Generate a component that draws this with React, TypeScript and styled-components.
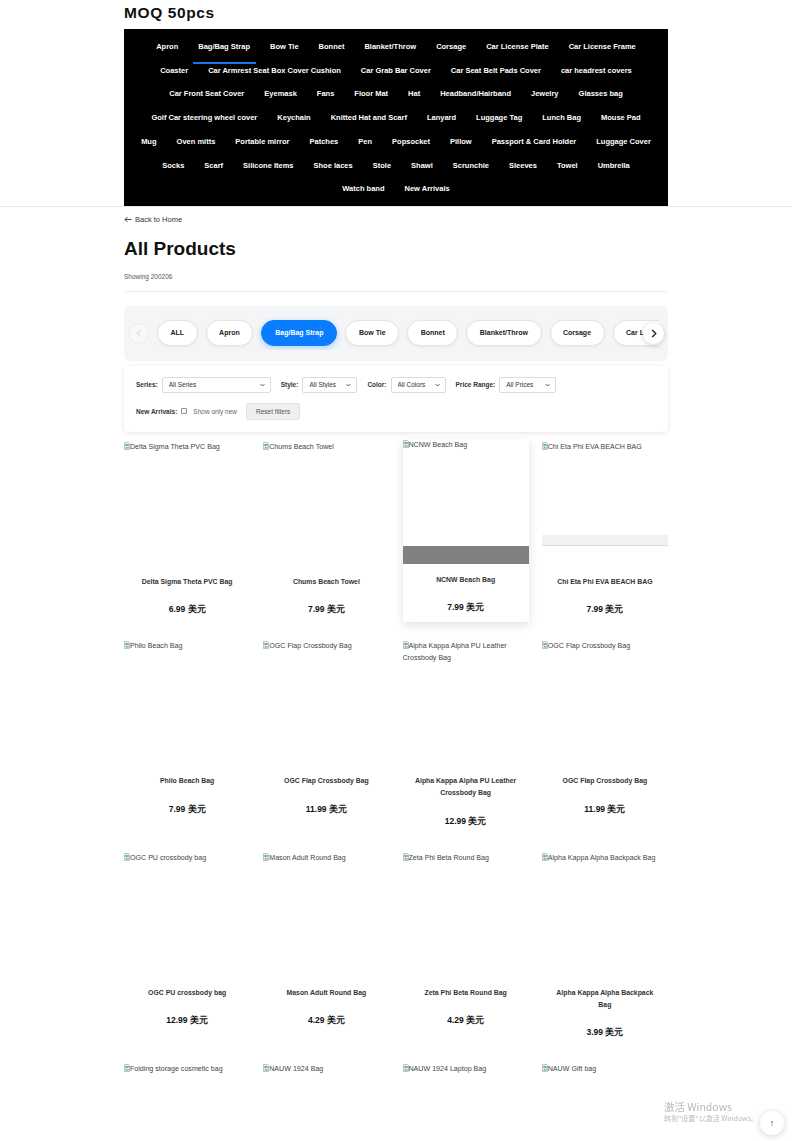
import React from 'react';
import styled, { createGlobalStyle, css } from 'styled-components';

const GlobalStyle = createGlobalStyle`
  html, body {
    padding: 0;
    background: #fff;
  }
  body {
    margin: 0 8px 0 0;
    font-family: "Liberation Sans", Arial, sans-serif;
    color: #222;
  }
`;

const NAV_ITEMS = [
  'Apron', 'Bag/Bag Strap', 'Bow Tie', 'Bonnet', 'Blanket/Throw', 'Corsage', 'Car License Plate', 'Car License Frame',
  'Coaster', 'Car Armrest Seat Box Cover Cushion', 'Car Grab Bar Cover', 'Car Seat Belt Pads Cover', 'car headrest covers',
  'Car Front Seat Cover', 'Eyemask', 'Fans', 'Floor Mat', 'Hat', 'Headband/Hairband', 'Jewelry', 'Glasses bag',
  'Golf Car steering wheel cover', 'Keychain', 'Knitted Hat and Scarf', 'Lanyard', 'Luggage Tag', 'Lunch Bag', 'Mouse Pad',
  'Mug', 'Oven mitts', 'Portable mirror', 'Patches', 'Pen', 'Popsocket', 'Pillow', 'Passport & Card Holder', 'Luggage Cover',
  'Socks', 'Scarf', 'Silicone Items', 'Shoe laces', 'Stole', 'Shawl', 'Scrunchie', 'Sleeves', 'Towel', 'Umbrella',
  'Watch band', 'New Arrivals',
];

const PILLS = ['ALL', 'Apron', 'Bag/Bag Strap', 'Bow Tie', 'Bonnet', 'Blanket/Throw', 'Corsage', 'Car License Plate', 'Car License Frame'];

type Product = { name: string; price: string; overlay?: 'hover' | 'fade' };

const PRODUCTS: Product[] = [
  { name: 'Delta Sigma Theta PVC Bag', price: '6.99' },
  { name: 'Chums Beach Towel', price: '7.99' },
  { name: 'NCNW Beach Bag', price: '7.99', overlay: 'hover' },
  { name: 'Chi Eta Phi EVA BEACH BAG', price: '7.99', overlay: 'fade' },
  { name: 'Philo Beach Bag', price: '7.99' },
  { name: 'OGC Flap Crossbody Bag', price: '11.99' },
  { name: 'Alpha Kappa Alpha PU Leather Crossbody Bag', price: '12.99' },
  { name: 'OGC Flap Crossbody Bag', price: '11.99' },
  { name: 'OGC PU crossbody bag', price: '12.99' },
  { name: 'Mason Adult Round Bag', price: '4.29' },
  { name: 'Zeta Phi Beta Round Bag', price: '4.29' },
  { name: 'Alpha Kappa Alpha Backpack Bag', price: '3.99' },
  { name: 'Folding storage cosmetic bag', price: '5.99' },
  { name: 'NAUW 1924 Bag', price: '7.99' },
  { name: 'NAUW 1924 Laptop Bag', price: '9.99' },
  { name: 'NAUW Gift bag', price: '3.99' },
];

const Header = styled.header`
  border-bottom: 1px solid #e8e8e8;
`;

const Wrap = styled.div`
  width: 544px;
  margin: 0 auto;
`;

const Brand = styled.div`
  padding-top: 4px;
  font-size: 15.5px;
  font-weight: 700;
  letter-spacing: 0.6px;
  line-height: 18px;
  margin-bottom: 7px;
  color: #111;
`;

const Nav = styled.nav`
  background: #000;
  padding: 6px 2px 5px;
  display: flex;
  flex-wrap: wrap;
  justify-content: center;
`;

const NavItem = styled.a<{ $active?: boolean }>`
  position: relative;
  color: #fff;
  font-size: 7.5px;
  font-weight: 700;
  line-height: 11.7px;
  padding: 6px 10px;
  white-space: nowrap;
  text-decoration: none;

  ${({ $active }) =>
    $active &&
    css`
      &::after {
        content: '';
        position: absolute;
        left: 5px;
        right: 4px;
        bottom: -5px;
        height: 2px;
        background: #1677e6;
      }
    `}
`;

const BackLink = styled.a`
  display: flex;
  align-items: center;
  gap: 3px;
  margin-top: 8px;
  font-size: 7.5px;
  line-height: 10px;
  color: #333;
`;

const Title = styled.h1`
  margin: 12px 0 0;
  font-size: 19px;
  line-height: 23px;
  font-weight: 700;
  color: #111;
`;

const Count = styled.div`
  margin-top: 12px;
  font-size: 6.5px;
  line-height: 9px;
  color: #555;
  padding-bottom: 10px;
  border-bottom: 1px solid #eeeeee;
`;

const CategoryPanel = styled.div`
  position: relative;
  margin-top: 14px;
  background: #f4f5f7;
  border-radius: 6px;
  padding: 11px 9px 11px 4px;
  display: flex;
  align-items: center;
`;

const ArrowButton = styled.button<{ $side: 'left' | 'right' }>`
  width: 21px;
  height: 21px;
  border-radius: 50%;
  padding: 0;
  display: flex;
  align-items: center;
  justify-content: center;
  flex-shrink: 0;

  ${({ $side }) =>
    $side === 'left'
      ? css`
          background: #f7f8fa;
          border: 1px solid #ececef;
          color: #c8c8c8;
        `
      : css`
          position: absolute;
          right: 4px;
          top: 50%;
          margin-top: -10px;
          background: #fff;
          border: none;
          color: #222;
          box-shadow: 0 1px 5px rgba(0, 0, 0, 0.18);
        `}
`;

const PillTrack = styled.div`
  flex: 1;
  margin-left: 8px;
  display: flex;
  gap: 8px;
  overflow: hidden;
  padding: 3px 0 4px;
`;

const Pill = styled.button<{ $active?: boolean }>`
  flex-shrink: 0;
  height: 26px;
  padding: 0 12.5px;
  border-radius: 13px;
  font-family: inherit;
  font-size: 7px;
  font-weight: 700;
  white-space: nowrap;
  background: #fff;
  color: #222;
  border: 1px solid #e4e4e7;
  box-shadow: 0 1px 3px rgba(0, 0, 0, 0.06);

  ${({ $active }) =>
    $active &&
    css`
      padding: 0 13px;
      background: #0a7cff;
      border-color: #0a7cff;
      color: #fff;
      box-shadow: 0 2px 6px rgba(10, 124, 255, 0.3);
    `}
`;

const FilterPanel = styled.div`
  margin-top: 5px;
  background: #fff;
  border-radius: 5px;
  box-shadow: 0 1px 5px rgba(0, 0, 0, 0.1);
  padding: 11px 12px 12px;
  display: flex;
  flex-direction: column;
  gap: 10px;
`;

const FilterRow = styled.div`
  display: flex;
  align-items: center;
`;

const FilterLabel = styled.label`
  font-size: 6.5px;
  font-weight: 700;
  color: #333;
  margin-right: 4px;
`;

const SelectBox = styled.div<{ $w: number }>`
  position: relative;
  width: ${({ $w }) => $w}px;
  height: 16px;
  margin-right: 10px;
`;

const Select = styled.select`
  appearance: none;
  display: block;
  box-sizing: border-box;
  width: 100%;
  height: 16px;
  border: 1px solid #dcdcdc;
  border-radius: 2px;
  background: #fff;
  padding: 0 6px;
  font-family: inherit;
  font-size: 6.5px;
  color: #333;
`;

const Chevron = styled.svg`
  position: absolute;
  right: 6px;
  top: 50%;
  transform: translateY(-50%);
  pointer-events: none;
`;

const Check = styled.input`
  appearance: none;
  width: 6px;
  height: 6px;
  margin: 0 6px 0 0;
  border: 1px solid #8a8a8a;
  border-radius: 1px;
  background: #fff;
`;

const CheckText = styled.span`
  font-size: 6.5px;
  color: #666;
  margin-right: 9px;
`;

const ResetButton = styled.button`
  height: 17px;
  padding: 0 9px;
  background: #efefef;
  border: 1px solid #e2e2e2;
  border-radius: 2px;
  font-family: inherit;
  font-size: 6.5px;
  color: #555;
`;

const Grid = styled.div`
  margin-top: 9px;
  display: grid;
  grid-template-columns: repeat(4, 1fr);
  gap: 16px 13px;
  align-items: start;
`;

const Card = styled.div<{ $hover?: boolean }>`
  background: #fff;
  padding-bottom: 8px;
  display: flex;
  flex-direction: column;

  ${({ $hover }) =>
    $hover &&
    css`
      transform: translateY(-2px);
      box-shadow: 0 3px 9px rgba(0, 0, 0, 0.12);
    `}
`;

const ImageBox = styled.div`
  position: relative;
  height: 126px;
  overflow: hidden;
`;

const AltText = styled.span`
  display: block;
  font-size: 7.1px;
  line-height: 12px;
  color: #444;
`;

const Overlay = styled.div<{ $kind: 'hover' | 'fade' }>`
  position: absolute;
  left: 0;
  right: 0;

  ${({ $kind }) =>
    $kind === 'hover'
      ? css`
          bottom: 1px;
          height: 18px;
          background: #808080;
        `
      : css`
          bottom: 21px;
          height: 10px;
          background: #f1f1f1;
          border-bottom: 1px solid #dcdcdc;
        `}
`;

const CardTitle = styled.div`
  margin-top: 9px;
  padding: 0 8px;
  font-size: 6.9px;
  font-weight: 700;
  line-height: 12px;
  text-align: center;
  color: #333;
`;

const Price = styled.div`
  margin-top: 15.5px;
  font-size: 8.5px;
  font-weight: 700;
  line-height: 13px;
  text-align: center;
  color: #111;
`;

const Watermark = styled.div`
  position: fixed;
  left: 664px;
  bottom: 18px;
  color: #b9b9b9;
  font-family: "Noto Sans CJK SC", "Liberation Sans", sans-serif;
  pointer-events: none;
`;

const WatermarkTitle = styled.div`
  font-size: 10.5px;
  line-height: 13px;
`;

const WatermarkSub = styled.div`
  font-size: 7px;
  line-height: 10px;
`;

const ScrollTop = styled.button`
  position: fixed;
  right: 16px;
  bottom: 6px;
  width: 24px;
  height: 24px;
  border-radius: 50%;
  border: none;
  background: #fff;
  box-shadow: 0 1px 6px rgba(0, 0, 0, 0.18);
  font-size: 9px;
  color: #333;
  padding: 0;
`;

const BrokenIcon = () => (
  <svg width="6" height="8" viewBox="0 0 6 8" style={{ verticalAlign: '-1px' }}>
    <path d="M0.5 0.5h4l1 1v6h-5z" fill="#f3f3f3" stroke="#9a9a9a" strokeWidth="0.6" />
    <rect x="1.2" y="2" width="3.6" height="2" fill="#6fa8e8" />
    <path d="M1.2 6.5l1.4-2 1.2 1.2 1-0.8v1.6z" fill="#5cb85c" />
  </svg>
);

const ChevronDown = () => (
  <Chevron width="5" height="4" viewBox="0 0 10 6">
    <path d="M1 1l4 4 4-4" fill="none" stroke="#333" strokeWidth="1.6" />
  </Chevron>
);

const FilterSelect = ({ width, label }: { width: number; label: string }) => (
  <SelectBox $w={width}>
    <Select defaultValue={label}>
      <option>{label}</option>
    </Select>
    <ChevronDown />
  </SelectBox>
);

const ProductCard = ({ product }: { product: Product }) => (
  <Card $hover={product.overlay === 'hover'}>
    <ImageBox>
      <AltText>
        <BrokenIcon />
        {product.name}
      </AltText>
      {product.overlay && <Overlay $kind={product.overlay} />}
    </ImageBox>
    <CardTitle>{product.name}</CardTitle>
    <Price>{product.price} 美元</Price>
  </Card>
);

const App = () => {
  return (
    <>
      <GlobalStyle />
      <Header>
        <Wrap>
          <Brand>MOQ 50pcs</Brand>
          <Nav>
            {NAV_ITEMS.map((item) => (
              <NavItem key={item} $active={item === 'Bag/Bag Strap'}>
                {item}
              </NavItem>
            ))}
          </Nav>
        </Wrap>
      </Header>
      <Wrap as="main">
        <BackLink>
          <svg width="8" height="7" viewBox="0 0 8 7">
            <path d="M7.5 3.5H1M3.5 1L1 3.5 3.5 6" fill="none" stroke="#333" strokeWidth="0.9" />
          </svg>
          Back to Home
        </BackLink>
        <Title>All Products</Title>
        <Count>Showing 200206</Count>

        <CategoryPanel>
          <ArrowButton $side="left">
            <svg width="6" height="8" viewBox="0 0 6 10">
              <path d="M5 1L1 5l4 4" fill="none" stroke="currentColor" strokeWidth="1.2" />
            </svg>
          </ArrowButton>
          <PillTrack>
            {PILLS.map((p) => (
              <Pill key={p} $active={p === 'Bag/Bag Strap'}>
                {p}
              </Pill>
            ))}
          </PillTrack>
          <ArrowButton $side="right">
            <svg width="6" height="9" viewBox="0 0 6 10">
              <path d="M1 1l4 4-4 4" fill="none" stroke="currentColor" strokeWidth="1.5" />
            </svg>
          </ArrowButton>
        </CategoryPanel>

        <FilterPanel>
          <FilterRow>
            <FilterLabel>Series:</FilterLabel>
            <FilterSelect width={109} label="All Series" />
            <FilterLabel>Style:</FilterLabel>
            <FilterSelect width={55} label="All Styles" />
            <FilterLabel>Color:</FilterLabel>
            <FilterSelect width={55} label="All Colors" />
            <FilterLabel>Price Range:</FilterLabel>
            <FilterSelect width={57} label="All Prices" />
          </FilterRow>
          <FilterRow>
            <FilterLabel>New Arrivals:</FilterLabel>
            <Check type="checkbox" />
            <CheckText>Show only new</CheckText>
            <ResetButton>Reset filters</ResetButton>
          </FilterRow>
        </FilterPanel>

        <Grid>
          {PRODUCTS.map((p, i) => (
            <ProductCard key={i} product={p} />
          ))}
        </Grid>
      </Wrap>

      <Watermark>
        <WatermarkTitle>激活 Windows</WatermarkTitle>
        <WatermarkSub>转到"设置"以激活 Windows。</WatermarkSub>
      </Watermark>
      <ScrollTop>↑</ScrollTop>
    </>
  );
};

export default App;
